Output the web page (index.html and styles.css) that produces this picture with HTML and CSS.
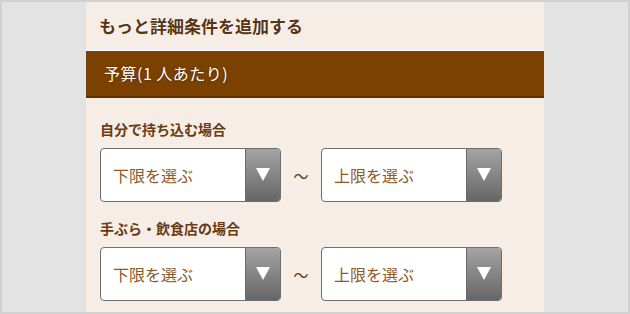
FILE: index.html
```html
<!DOCTYPE html>
<html lang="ja">
<head>
  <meta charset="UTF-8">
  <title>詳細条件</title>
  <link rel="stylesheet" href="styles.css">
</head>
<body>
  <div class="frame">
    <div class="panel">
      <h2 class="more-title">もっと詳細条件を追加する</h2>
      <div class="section-head">予算(1 人あたり)</div>

      <div class="budget-group">
        <div class="budget-label">自分で持ち込む場合</div>
        <div class="range-row">
          <div class="picker"><span class="picker-text">下限を選ぶ</span><span class="picker-btn"></span></div>
          <span class="tilde">～</span>
          <div class="picker"><span class="picker-text">上限を選ぶ</span><span class="picker-btn"></span></div>
        </div>
      </div>

      <div class="budget-group second">
        <div class="budget-label">手ぶら・飲食店の場合</div>
        <div class="range-row">
          <div class="picker"><span class="picker-text">下限を選ぶ</span><span class="picker-btn"></span></div>
          <span class="tilde">～</span>
          <div class="picker"><span class="picker-text">上限を選ぶ</span><span class="picker-btn"></span></div>
        </div>
      </div>
    </div>
  </div>
</body>
</html>
```

FILE: styles.css
```css
body {
  margin: 0;
  font-family: "Noto Sans CJK JP", "Noto Sans", sans-serif;
}
.frame {
  width: 630px;
  height: 314px;
  box-sizing: border-box;
  border: 2px solid #d2d2d2;
  background-color: #e3e3e3;
  padding: 0 84px;
  overflow: hidden;
}
.panel {
  background-color: #f5ede6;
  height: 100%;
}
.more-title {
  margin: 0;
  height: 48px;
  line-height: 48px;
  padding-left: 13px;
  font-size: 17px;
  font-weight: bold;
  color: #5a3410;
  text-shadow: 0 0 2px #fff, 0 0 1px #fff;
}
.section-head {
  height: 45px;
  line-height: 45px;
  border-top: 1px solid #fff;
  border-bottom: 2px solid #5e3100;
  background-color: #7a4100;
  color: #fff;
  font-size: 16px;
  letter-spacing: 0.5px;
  padding-left: 18px;
  text-shadow: 0 0 2px #4a2400;
}
.budget-group {
  padding: 21px 14px 0;
}
.budget-group.second {
  padding-top: 16px;
}
.budget-label {
  height: 20px;
  line-height: 20px;
  font-size: 14px;
  font-weight: bold;
  color: #6a3a10;
  margin-bottom: 9px;
}
.range-row {
  display: flex;
  align-items: center;
}
.picker {
  width: 181px;
  height: 54px;
  box-sizing: border-box;
  display: flex;
  border: 1px solid #6e6e6e;
  border-radius: 4px;
  background-color: #fff;
  overflow: hidden;
}
.picker-text {
  flex: 1;
  padding-left: 12px;
  line-height: 52px;
  font-size: 16px;
  color: #8c5a28;
}
.picker-btn {
  width: 34px;
  border-left: 1px solid #6a6a6a;
  background: linear-gradient(#a4a4a4, #666);
  display: flex;
  align-items: center;
  justify-content: center;
}
.picker-btn::after {
  content: "";
  width: 0;
  height: 0;
  border-left: 7px solid transparent;
  border-right: 7px solid transparent;
  border-top: 13px solid #fff;
  margin-bottom: 2px;
}
.tilde {
  width: 40px;
  text-align: center;
  font-size: 15px;
  color: #6a3a10;
}
```
